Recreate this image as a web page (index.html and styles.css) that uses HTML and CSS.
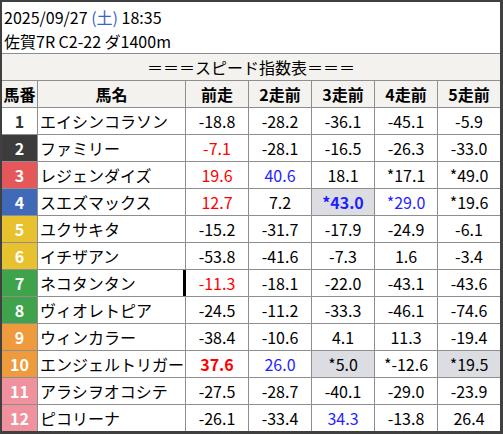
FILE: index.html
```html
<!DOCTYPE html>
<html lang="ja">
<head>
<meta charset="utf-8">
<link rel="stylesheet" href="styles.css">
</head>
<body>
<div class="frame">
  <div class="title">
    <div>2025/09/27 <span class="sat">(土)</span> 18:35</div>
    <div>佐賀7R C2-22 ダ1400m</div>
  </div>
  <div class="sheet">
    <div class="band">＝＝＝スピード指数表＝＝＝</div>
    <div class="hd">馬番</div><div class="hd">馬名</div><div class="hd">前走</div><div class="hd">2走前</div><div class="hd">3走前</div><div class="hd">4走前</div><div class="hd">5走前</div>

    <div class="c no w1">1</div><div class="c name">エイシンコラソン</div><div class="c">-18.8</div><div class="c">-28.2</div><div class="c">-36.1</div><div class="c">-45.1</div><div class="c">-5.9</div>
    <div class="c no w2">2</div><div class="c name">ファミリー</div><div class="c red">-7.1</div><div class="c">-28.1</div><div class="c">-16.5</div><div class="c">-26.3</div><div class="c">-33.0</div>
    <div class="c no w3">3</div><div class="c name">レジェンダイズ</div><div class="c red">19.6</div><div class="c blue">40.6</div><div class="c">18.1</div><div class="c">*17.1</div><div class="c">*49.0</div>
    <div class="c no w4">4</div><div class="c name">スエズマックス</div><div class="c red">12.7</div><div class="c">7.2</div><div class="c blue b hl">*43.0</div><div class="c blue">*29.0</div><div class="c">*19.6</div>
    <div class="c no w5">5</div><div class="c name">ユクサキタ</div><div class="c">-15.2</div><div class="c">-31.7</div><div class="c">-17.9</div><div class="c">-24.9</div><div class="c">-6.1</div>
    <div class="c no w5">6</div><div class="c name">イチザアン</div><div class="c">-53.8</div><div class="c">-41.6</div><div class="c">-7.3</div><div class="c">1.6</div><div class="c">-3.4</div>
    <div class="c no w6">7</div><div class="c name">ネコタンタン</div><div class="c red bar">-11.3</div><div class="c">-18.1</div><div class="c">-22.0</div><div class="c">-43.1</div><div class="c">-43.6</div>
    <div class="c no w6">8</div><div class="c name">ヴィオレトピア</div><div class="c">-24.5</div><div class="c">-11.2</div><div class="c">-33.3</div><div class="c">-46.1</div><div class="c">-74.6</div>
    <div class="c no w7">9</div><div class="c name">ウィンカラー</div><div class="c">-38.4</div><div class="c">-10.6</div><div class="c">4.1</div><div class="c">11.3</div><div class="c">-19.4</div>
    <div class="c no w7">10</div><div class="c name">エンジェルトリガー</div><div class="c red b">37.6</div><div class="c blue">26.0</div><div class="c hl">*5.0</div><div class="c">*-12.6</div><div class="c hl">*19.5</div>
    <div class="c no w8">11</div><div class="c name">アラシヲオコシテ</div><div class="c">-27.5</div><div class="c">-28.7</div><div class="c">-40.1</div><div class="c">-29.0</div><div class="c">-23.9</div>
    <div class="c no w8">12</div><div class="c name">ピコリーナ</div><div class="c">-26.1</div><div class="c">-33.4</div><div class="c blue">34.3</div><div class="c">-13.8</div><div class="c">26.4</div>
  </div>
</div>
</body>
</html>
```

FILE: styles.css
```css
html, body {
  margin: 0;
  padding: 0;
  background: #ffffff;
}

body {
  font-family: "Noto Sans CJK JP", "Noto Sans", sans-serif;
  font-size: 16px;
  color: #000;
}

.frame {
  box-sizing: border-box;
  width: 503px;
  height: 434px;
  border-style: solid;
  border-color: #404040;
  border-width: 2px 3px 3px 2px;
  display: flex;
  flex-direction: column;
}

.title {
  height: 48px;
  padding: 3px 0 0 2px;
  line-height: 24px;
  border-bottom: 1px solid #8e8e8e;
}

.sat {
  color: #3a64c4;
}

.sheet {
  display: grid;
  grid-template-columns: 35px 147px 62px 62px 62px 62px 62px;
  grid-auto-rows: 26px;
  gap: 1px;
  background: #8e8e8e;
}

.band {
  grid-column: 1 / -1;
  background: #f3f2ee;
  display: flex;
  align-items: center;
  justify-content: center;
}

.hd {
  background: #f3f2ee;
  font-weight: bold;
  display: flex;
  align-items: center;
  justify-content: center;
}

.c {
  background: #ffffff;
  display: flex;
  align-items: center;
  justify-content: center;
  white-space: nowrap;
}

.name {
  justify-content: flex-start;
  padding-left: 2px;
}

.no {
  font-weight: bold;
  color: #ffffff;
}

.w1 { background: #ffffff; color: #333333; }
.w2 { background: #3c3c3c; }
.w3 { background: #e4585a; }
.w4 { background: #4169b9; }
.w5 { background: #e7c22e; }
.w6 { background: #3ea34a; }
.w7 { background: #ee9a3d; }
.w8 { background: #f0919e; }

.red { color: #ff0000; }
.blue { color: #1f1fff; }
.b { font-weight: bold; }
.hl { background: #dcdde3; }

.bar {
  position: relative;
}

.bar::before {
  content: "";
  position: absolute;
  left: -3px;
  top: 0;
  bottom: 0;
  width: 3px;
  background: #000000;
}
```
